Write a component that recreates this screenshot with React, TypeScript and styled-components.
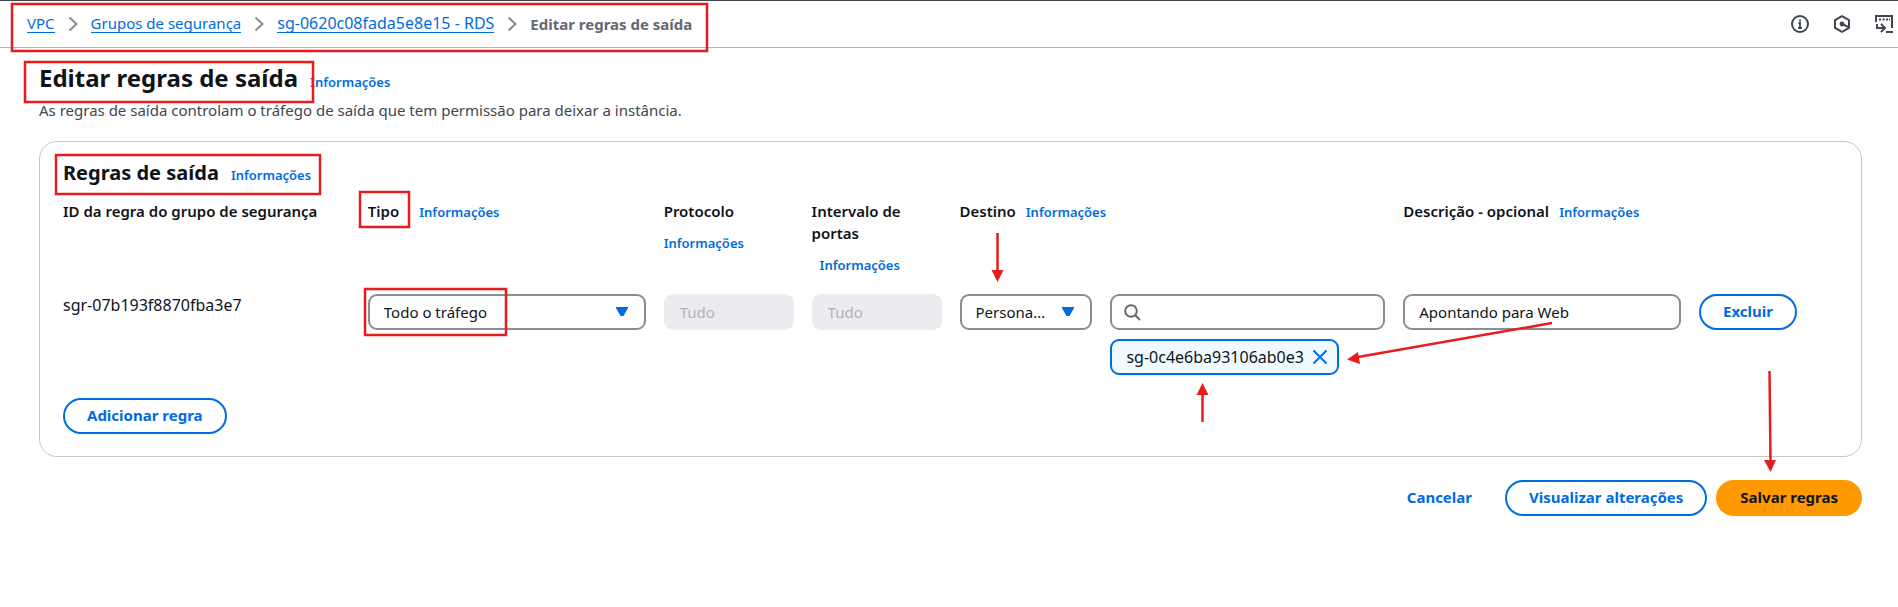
import React from "react";
import styled, { createGlobalStyle, css } from "styled-components";

const blue = "#006ce0";
const ink = "#0f141a";
const grey = "#8c8c94";
const red = "#e81c1c";

const GlobalStyle = createGlobalStyle`
  *, *::before, *::after { box-sizing: border-box; }
  body {
    margin: 0;
    background: #fff;
    color: ${ink};
    font: 400 15px/22px "Noto Sans", "Open Sans", sans-serif;
  }
  h1, h2, p, ol { margin: 0; padding: 0; }
  button, input, select { font: inherit; color: inherit; margin: 0; }
`;

const Page = styled.div`
  position: relative;
`;

const TopBar = styled.header`
  display: flex;
  align-items: center;
  justify-content: space-between;
  height: 48px;
  padding: 0 5px 1px 27px;
  border-top: 1px solid #424650;
  border-bottom: 1px solid #b4b4bb;
`;

const Crumbs = styled.ol`
  display: flex;
  align-items: center;
  list-style: none;
`;

const Crumb = styled.li`
  display: flex;
  align-items: center;
`;

const CrumbLink = styled.a<{ $resource?: boolean }>`
  color: ${blue};
  font-size: ${(p) => (p.$resource ? 16 : 15)}px;
  line-height: 18px;
  text-decoration: none;
  border-bottom: 1px solid ${blue};
`;

const CrumbCurrent = styled.span`
  color: #656871;
  font-weight: 700;
`;

const Separator = styled.svg`
  width: 10px;
  height: 16px;
  margin: 0 13px;
  fill: none;
  stroke: ${grey};
  stroke-width: 2;
`;

const Tools = styled.div`
  display: flex;
  gap: 24px;
`;

const ToolButton = styled.button`
  display: flex;
  padding: 0;
  border: 0;
  background: none;
  color: #424650;
  cursor: pointer;

  svg {
    width: 18px;
    height: 18px;
    fill: none;
    stroke: currentColor;
    stroke-width: 2;
  }
`;

const Main = styled.main`
  padding: 15px 36px 48px 39px;
`;

const TitleRow = styled.div`
  display: flex;
  align-items: baseline;
  gap: 12px;
`;

const Title = styled.h1`
  font-size: 24px;
  line-height: 30px;
  font-weight: 700;
`;

const SectionTitle = styled.h2`
  font-size: 20px;
  line-height: 24px;
  font-weight: 700;
`;

const Info = styled.a<{ $indent?: boolean }>`
  color: ${blue};
  font-size: 13px;
  line-height: 22px;
  font-weight: 600;
  text-decoration: none;
  ${(p) => p.$indent && css`padding-left: 8px;`}
`;

const Lead = styled.p`
  margin-top: 6px;
  color: #424650;
`;

const Card = styled.section`
  margin-top: 20px;
  padding: 19px 23px 22px;
  border: 1px solid #c6c6cd;
  border-radius: 18px;
`;

const RulesGrid = styled.div`
  display: grid;
  grid-template-columns:
    minmax(0, 287fr) minmax(0, 278fr) minmax(0, 130fr) minmax(0, 130fr)
    minmax(0, 426fr) minmax(0, 278fr) minmax(0, 139fr);
  gap: 18px;
  margin: 14px 0 23px;
  align-items: start;
`;

const HeadCell = styled.div<{ $wide?: boolean }>`
  display: flex;
  flex-wrap: wrap;
  align-items: baseline;
  gap: 10px ${(p) => (p.$wide ? 20 : 10)}px;
`;

const Label = styled.label`
  font-weight: 600;
`;

const HeadText = styled.span`
  font-weight: 600;
`;

const RuleId = styled.div`
  font-size: 16px;
`;

const fieldBox = css`
  width: 100%;
  height: 36px;
  border: 2px solid ${grey};
  border-radius: 9px;
  background: #fff;
  outline-offset: 2px;
`;

const TextInput = styled.input<{ $icon?: boolean }>`
  ${fieldBox}
  padding: 0 14px 0 ${(p) => (p.$icon ? 38 : 14)}px;

  &:disabled {
    border-color: #ebebf0;
    background: #ebebf0;
    color: #b4b4bb;
  }
`;

const FieldWrap = styled.div`
  position: relative;
`;

const SelectBox = styled.select`
  ${fieldBox}
  display: block;
  appearance: none;
  padding: 0 42px 0 14px;
  text-overflow: ellipsis;
  overflow: hidden;
  white-space: nowrap;
`;

const Caret = styled.svg`
  position: absolute;
  top: 13px;
  right: 18px;
  width: 12px;
  height: 10px;
  fill: ${blue};
  pointer-events: none;
`;

const SearchIcon = styled.svg`
  position: absolute;
  top: 10px;
  left: 14px;
  width: 17px;
  height: 17px;
  fill: none;
  stroke: #656871;
  stroke-width: 2;
  pointer-events: none;
`;

const Destination = styled.div`
  display: grid;
  grid-template-columns: minmax(0, 133fr) minmax(0, 275fr);
  column-gap: 18px;
  row-gap: 9px;
`;

const Token = styled.div`
  grid-column: 2;
  justify-self: start;
  display: flex;
  align-items: center;
  gap: 8px;
  height: 36px;
  padding: 0 9px 1px 14px;
  border: 2px solid ${blue};
  border-radius: 9px;
  background: #f0fbff;
  font-size: 16px;
  white-space: nowrap;
`;

const TokenRemove = styled.button`
  display: flex;
  padding: 0;
  border: 0;
  background: none;
  cursor: pointer;

  svg {
    width: 16px;
    height: 16px;
    fill: none;
    stroke: ${blue};
    stroke-width: 2;
  }
`;

const Button = styled.button<{ $kind?: "normal" | "primary" | "link" }>`
  height: 36px;
  padding: 0 22px 2px;
  border: 2px solid ${blue};
  border-radius: 18px;
  background: #fff;
  color: ${blue};
  font-weight: 700;
  white-space: nowrap;
  cursor: pointer;

  ${(p) => p.$kind === "primary" && css`
    border-color: #ff9900;
    background: #ff9900;
    color: ${ink};
  `}
  ${(p) => p.$kind === "link" && css`
    border-color: transparent;
    background: none;
  `}
`;

const Actions = styled.div`
  display: flex;
  justify-content: flex-end;
  gap: 9px;
  margin-top: 23px;
`;

const Annotations = styled.svg`
  position: absolute;
  top: 0;
  left: 0;
  width: 100%;
  height: 100%;
  overflow: hidden;
  pointer-events: none;
  fill: none;
  stroke: ${red};
  stroke-width: 2.5;

  polygon {
    fill: ${red};
    stroke: none;
  }
`;

const crumbs = [
  { text: "VPC" },
  { text: "Grupos de segurança" },
  { text: "sg-0620c08fada5e8e15 - RDS", resource: true },
];

const boxes = [
  [12, 4, 695, 47],
  [25, 62, 288, 40],
  [56, 155, 264, 39],
  [360, 192, 49, 35],
  [365, 289, 141, 46],
];

function Select({ id, value }: { id: string; value: string }) {
  return (
    <FieldWrap>
      <SelectBox id={id} defaultValue={value}>
        <option value={value}>{value}</option>
      </SelectBox>
      <Caret viewBox="0 0 12 10" aria-hidden="true">
        <path d="M0 0h12v1L7.5 9h-3L0 1z" />
      </Caret>
    </FieldWrap>
  );
}

export default function App() {
  return (
    <Page>
      <GlobalStyle />
      <TopBar>
        <nav aria-label="Navegação">
          <Crumbs>
            {crumbs.map(({ text, resource }) => (
              <Crumb key={text}>
                <CrumbLink href="#" $resource={resource}>{text}</CrumbLink>
                <Separator viewBox="0 0 10 16" aria-hidden="true">
                  <path d="M1.5 1.5l7 6.5-7 6.5" />
                </Separator>
              </Crumb>
            ))}
            <Crumb>
              <CrumbCurrent aria-current="page">Editar regras de saída</CrumbCurrent>
            </Crumb>
          </Crumbs>
        </nav>
        <Tools>
          <ToolButton aria-label="Informações">
            <svg viewBox="0 0 18 18">
              <circle cx="9" cy="9" r="8" />
              <path d="M9 4.5v2M7.5 8H9v5M7 13h4" strokeWidth="1.8" />
            </svg>
          </ToolButton>
          <ToolButton aria-label="Configurações">
            <svg viewBox="0 0 18 18">
              <path d="M9 1.2L16 5v8l-7 3.8L2 13V5z" />
              <circle cx="9" cy="9" r="2.4" fill="currentColor" stroke="none" />
              <path d="M9 9l6.5 3.2" />
            </svg>
          </ToolButton>
          <ToolButton aria-label="CloudShell">
            <svg viewBox="0 0 18 18">
              <path d="M1 7V1h16v12M11 17h7M2 9v4h7M6 9l4 4-4 4" />
              <path d="M4 4.5h2M7.5 4.5h2M11 4.5h2M14 4.5h1" />
            </svg>
          </ToolButton>
        </Tools>
      </TopBar>

      <Main>
        <TitleRow>
          <Title>Editar regras de saída</Title>
          <Info href="#">Informações</Info>
        </TitleRow>
        <Lead>
          As regras de saída controlam o tráfego de saída que tem permissão para deixar a instância.
        </Lead>

        <Card>
          <TitleRow>
            <SectionTitle>Regras de saída</SectionTitle>
            <Info href="#">Informações</Info>
          </TitleRow>

          <RulesGrid>
            <HeadCell>
              <HeadText>ID da regra do grupo de segurança</HeadText>
            </HeadCell>
            <HeadCell $wide>
              <Label htmlFor="tipo">Tipo</Label>
              <Info href="#">Informações</Info>
            </HeadCell>
            <HeadCell>
              <Label htmlFor="protocolo">Protocolo</Label>
              <Info href="#">Informações</Info>
            </HeadCell>
            <HeadCell>
              <Label htmlFor="portas">Intervalo de portas</Label>
              <Info href="#" $indent>Informações</Info>
            </HeadCell>
            <HeadCell>
              <Label htmlFor="destino">Destino</Label>
              <Info href="#">Informações</Info>
            </HeadCell>
            <HeadCell>
              <Label htmlFor="descricao">Descrição - opcional</Label>
              <Info href="#">Informações</Info>
            </HeadCell>
            <div />

            <RuleId>sgr-07b193f8870fba3e7</RuleId>
            <Select id="tipo" value="Todo o tráfego" />
            <TextInput id="protocolo" defaultValue="Tudo" disabled />
            <TextInput id="portas" defaultValue="Tudo" disabled />
            <Destination>
              <Select id="destino" value="Personalizado" />
              <FieldWrap>
                <TextInput type="search" aria-label="Destino" $icon />
                <SearchIcon viewBox="0 0 17 17" aria-hidden="true">
                  <circle cx="7" cy="7" r="5.8" />
                  <path d="M11 11l5 5" />
                </SearchIcon>
              </FieldWrap>
              <Token>
                sg-0c4e6ba93106ab0e3
                <TokenRemove aria-label="Remover">
                  <svg viewBox="0 0 16 16">
                    <path d="M1.5 1.5l13 13M14.5 1.5l-13 13" />
                  </svg>
                </TokenRemove>
              </Token>
            </Destination>
            <TextInput id="descricao" defaultValue="Apontando para Web" />
            <div>
              <Button>Excluir</Button>
            </div>
          </RulesGrid>

          <Button>Adicionar regra</Button>
        </Card>

        <Actions>
          <Button $kind="link">Cancelar</Button>
          <Button>Visualizar alterações</Button>
          <Button $kind="primary">Salvar regras</Button>
        </Actions>
      </Main>

      <Annotations aria-hidden="true">
        {boxes.map(([x, y, width, height]) => (
          <rect key={`${x}-${y}`} x={x} y={y} width={width} height={height} />
        ))}
        <path d="M997.5 233v38" />
        <polygon points="991.5,270 1003.5,270 997.5,282" />
        <path d="M1202.5 422v-28" />
        <polygon points="1196.5,395 1208.5,395 1202.5,383" />
        <path d="M1552 323L1358 357" />
        <polygon points="1347,359.5 1358,352 1360,364" />
        <path d="M1769.5 371l1 90" />
        <polygon points="1764,460 1776,460 1770.5,472" />
      </Annotations>
    </Page>
  );
}
